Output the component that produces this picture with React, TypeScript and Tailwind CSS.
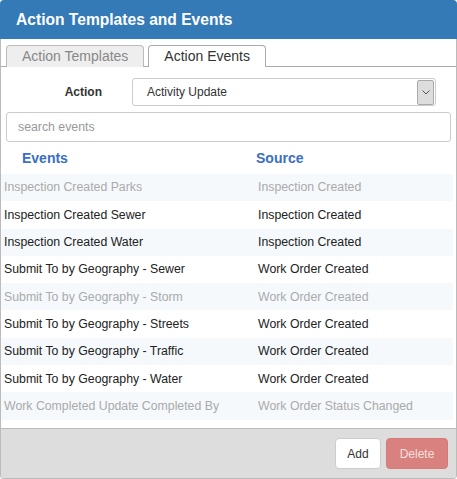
const rows = [
  { event: 'Inspection Created Parks', source: 'Inspection Created', off: true },
  { event: 'Inspection Created Sewer', source: 'Inspection Created', off: false },
  { event: 'Inspection Created Water', source: 'Inspection Created', off: false },
  { event: 'Submit To by Geography - Sewer', source: 'Work Order Created', off: false },
  { event: 'Submit To by Geography - Storm', source: 'Work Order Created', off: true },
  { event: 'Submit To by Geography - Streets', source: 'Work Order Created', off: false },
  { event: 'Submit To by Geography - Traffic', source: 'Work Order Created', off: false },
  { event: 'Submit To by Geography - Water', source: 'Work Order Created', off: false },
  { event: 'Work Completed Update Completed By', source: 'Work Order Status Changed', off: true },
]

export default function App() {
  return (
    <div className="w-[457px] h-[479px] bg-white flex flex-col" style={{ fontFamily: '"Liberation Sans", Arial, sans-serif' }}>
      <div className="h-[39px] bg-[#337ab7] rounded-t-[4px] flex items-center px-4 shrink-0">
        <h1 className="text-white font-bold text-[15.6px]">Action Templates and Events</h1>
      </div>

      <div className="flex-1 flex flex-col border-x border-b border-[#bbb] rounded-b-[4px] overflow-hidden">
        {/* Tabs */}
        <div className="flex items-end gap-[4px] pl-[5px] pt-[5px] border-b border-[#aaa] h-[28px] shrink-0">
          <div className="h-[22px] px-[15px] flex items-center bg-[#eee] border border-b-0 border-[#bbb] rounded-t-[4px] text-[14px] text-[#888] -mb-px">
            Action Templates
          </div>
          <div className="h-[22px] px-[15px] flex items-center bg-white border border-b-0 border-[#aaa] rounded-t-[4px] text-[14px] text-[#333] -mb-px relative z-10 pb-px">
            Action Events
          </div>
        </div>

        <div className="flex-1 flex flex-col">
          <div className="flex items-center mt-[11px] h-[28px]">
            <div className="w-[131px] text-right pr-[30px] text-[12px] font-bold text-[#333]">Action</div>
            <div className="w-[304px] h-[28px] border border-[#ccc] rounded-[3px] flex items-center justify-between pl-[14px] pr-px">
              <span className="text-[12px] text-[#333]">Activity Update</span>
              <span className="w-[17px] h-[25px] bg-[#ddd] border border-[#aaa] rounded-[2px] flex items-center justify-center">
                <svg width="8" height="5" viewBox="0 0 8 5" fill="none">
                  <path d="M0.5 0.5 L4 4 L7.5 0.5" stroke="#555" strokeWidth="1" />
                </svg>
              </span>
            </div>
          </div>

          <div className="mx-[5px] mt-[6px] h-[30px] border border-[#ccc] rounded-[3px] flex items-center px-[11px] text-[12.3px] text-[#999]">
            search events
          </div>

          <div className="flex items-center h-[32px] text-[14px] font-bold text-[#3a6fc2]">
            <div className="w-[255px] pl-[21px]">Events</div>
            <div>Source</div>
          </div>

          <div className="mr-[3px]">
            {rows.map((r, i) => (
              <div key={r.event}
                className={`flex items-center h-[27.3px] text-[12.3px] ${i % 2 === 0 ? 'bg-[#f5f9fc]' : 'bg-white'} ${r.off ? 'text-[#aaa]' : 'text-[#222]'}`}>
                <div className="w-[257px] pl-[3px]">{r.event}</div>
                <div>{r.source}</div>
              </div>
            ))}
          </div>
        </div>

        <div className="h-[50px] shrink-0 bg-[#ddd] border-t border-[#bbb] flex items-center justify-end gap-[5px] pr-[8px]">
          <button className="w-[46px] h-[31px] bg-white border border-[#ccc] rounded-[4px] text-[12px] text-[#333]">Add</button>
          <button className="w-[62px] h-[31px] bg-[#d9817e] border border-[#d67a77] rounded-[4px] text-[12px] text-[#f7e0df]">Delete</button>
        </div>
      </div>
    </div>
  )
}
